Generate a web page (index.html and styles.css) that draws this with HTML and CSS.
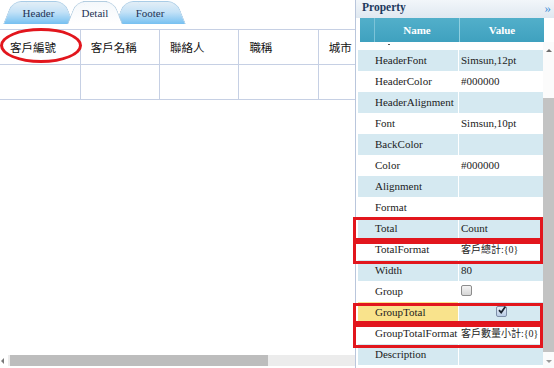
FILE: index.html
```html
<!DOCTYPE html>
<html lang="zh-Hant">
<head>
  <meta charset="UTF-8" />
  <title>Report Designer</title>
  <link rel="stylesheet" href="styles.css">
</head>
<body>
<div class="app">
  <div class="designer">
    <div class="tabs">
      <div class="tab">Header</div>
      <div class="tab active">Detail</div>
      <div class="tab">Footer</div>
    </div>
    <div class="sheet">
      <table class="cols">
        <colgroup><col class="c1"><col><col><col><col></colgroup>
        <tr><th>客戶編號</th><th>客戶名稱</th><th>聯絡人</th><th>職稱</th><th>城市</th></tr>
        <tr><td></td><td></td><td></td><td></td><td></td></tr>
      </table>
    </div>
    <div class="hscroll">
      <span class="arrow-left"></span>
      <div class="htrack"><div class="hthumb"></div></div>
    </div>
  </div>

  <div class="props">
    <div class="props-title">Property<span class="collapse">»</span></div>
    <div class="props-head">
      <span class="rh"></span>
      <span class="hname">Name</span>
      <span class="hvalue">Value</span>
    </div>
    <div class="props-body">
      <div class="props-rows">
        <div class="prow partial"><span class="pname"><i class="dot"></i></span><span class="pval"></span></div>
        <div class="prow alt"><span class="pname">HeaderFont</span><span class="pval">Simsun,12pt</span></div>
        <div class="prow"><span class="pname">HeaderColor</span><span class="pval">#000000</span></div>
        <div class="prow alt"><span class="pname">HeaderAlignment</span><span class="pval"></span></div>
        <div class="prow"><span class="pname">Font</span><span class="pval">Simsun,10pt</span></div>
        <div class="prow alt"><span class="pname">BackColor</span><span class="pval"></span></div>
        <div class="prow"><span class="pname">Color</span><span class="pval">#000000</span></div>
        <div class="prow alt"><span class="pname">Alignment</span><span class="pval"></span></div>
        <div class="prow"><span class="pname">Format</span><span class="pval"></span></div>
        <div class="prow alt"><span class="pname">Total</span><span class="pval">Count</span></div>
        <div class="prow"><span class="pname">TotalFormat</span><span class="pval cjk">客戶總計:{0}</span></div>
        <div class="prow alt"><span class="pname">Width</span><span class="pval">80</span></div>
        <div class="prow"><span class="pname">Group</span><span class="pval"><span class="check"></span></span></div>
        <div class="prow alt"><span class="pname selected">GroupTotal</span><span class="pval center"><span class="check on"><svg viewBox="0 0 10 10" width="10" height="10"><path d="M2 5.2 L4.2 7.6 L8.3 1.8" fill="none" stroke="#1b2430" stroke-width="1.8"/></svg></span></span></div>
        <div class="prow"><span class="pname">GroupTotalFormat</span><span class="pval cjk">客戶數量小計:{0}</span></div>
        <div class="prow alt"><span class="pname">Description</span><span class="pval"></span></div>
        <div class="prow"><span class="pname"></span><span class="pval"></span></div>
      </div>
      <div class="vscroll">
        <span class="arrow-up"></span>
        <div class="vthumb"></div>
        <span class="arrow-down"></span>
      </div>
    </div>
  </div>

  <!-- hand-drawn annotations -->
  <div class="mark ellipse"></div>
  <div class="mark box total"></div>
  <div class="mark box total-format"></div>
  <div class="mark box group-total"></div>
  <div class="mark box group-total-format"></div>
</div>
</body>
</html>
```

FILE: styles.css
```css
html, body { margin: 0; padding: 0; background: #fff; }
body { font-family: "Liberation Serif", "Noto Sans CJK TC", serif; font-size: 11px; color: #1c1c1c; }

.app { position: relative; display: flex; width: 554px; height: 368px; overflow: hidden; }

/* left: designer */
.designer { width: 355px; border-right: 1px solid #b9c6dc; display: flex; flex-direction: column; }
.tabs { height: 29px; display: flex; align-items: flex-start; padding: 1px 0 0 3px; box-sizing: border-box; }
.tab { position: relative; height: 23px; line-height: 25px; text-align: center; color: #1f3354; font-size: 11px; z-index: 1; }
.tab:nth-child(1) { width: 71px; }
.tab:nth-child(2) { width: 56px; margin-left: -7px; z-index: 3; }
.tab:nth-child(3) { width: 70px; margin-left: -8px; z-index: 2; }
.tab::before, .tab::after {
  content: ""; position: absolute; top: 0; bottom: 0; z-index: -1;
  background: linear-gradient(#e3eef6, #c4e2f7 45%, #76c0f1);
  border-top: 1px solid #a9cce6;
}
.tab::before { left: 0; right: 45%; transform: skewX(-22deg); transform-origin: bottom left; border-left: 1px solid #a9cce6; border-top-left-radius: 9px; }
.tab::after { left: 45%; right: 0; transform: skewX(22deg); transform-origin: bottom right; border-right: 1px solid #a9cce6; border-top-right-radius: 9px; }
.tab.active::before, .tab.active::after { background: linear-gradient(#f4f8fb, #ffffff); border-color: #b3cde0; }

.sheet { flex: 1; overflow: hidden; }
.cols { border-collapse: collapse; table-layout: fixed; width: 398px; }
.cols col { width: 78px; }
.cols col.c1 { width: 79px; }
.cols th, .cols td { border: 1px solid #c6d0e4; height: 34px; padding: 0 10px; text-align: left; font-weight: normal; font-family: "Noto Sans CJK TC", sans-serif; font-size: 11.5px; color: #111; white-space: nowrap; }
.cols th:first-child, .cols td:first-child { border-left: none; }

.hscroll { height: 15px; position: relative; display: flex; align-items: center; }
.arrow-left { position: absolute; left: 1px; top: 5px; border: 3px solid transparent; border-right-color: #7a7a7a; border-left-width: 0; }
.htrack { margin-left: 8px; flex: 1; height: 11px; background: #ececec; }
.hthumb { margin-left: 2px; width: 258px; height: 11px; background: #bdbdbd; }

/* right: property grid */
.props { width: 198px; background: #fff; display: flex; flex-direction: column; }
.props-title { position: relative; height: 18px; line-height: 15px; padding-left: 6px; font-weight: bold; font-size: 11.5px; color: #1d3a5e; background: linear-gradient(#f2f6fa, #dfe8f1); }
.collapse { position: absolute; right: 3px; top: 0; font-weight: normal; font-size: 13px; color: #3c8fd8; }
.props-head { display: flex; height: 24px; margin-left: 4px; margin-right: 10px; background: linear-gradient(#52afca, #3fa1bf); color: #fff; font-weight: bold; line-height: 24px; }
.props-head span { text-align: center; }
.rh { width: 14px; border-right: 1px solid #7cc3d8; }
.hname { width: 84px; border-right: 1px solid #8fcfe0; }
.hvalue { flex: 1; }

.props-body { flex: 1; display: flex; overflow: hidden; }
.props-rows { width: 185px; margin-left: 2px; overflow: hidden; }
.prow { display: flex; height: 21px; line-height: 21px; white-space: nowrap; }
.prow.partial { height: 8px; line-height: 8px; }
.pname { width: 83px; padding-left: 17px; border-right: 1px solid #fff; }
.pval { flex: 1; padding-left: 2px; overflow: hidden; }
.pval.cjk { font-size: 10px; }
.pval.center { text-align: center; padding-left: 0; }
.prow.alt .pname, .prow.alt .pval { background: #d5e9f1; }
.prow.alt .pname.selected { background: #f9e38c; }
.dot { display: inline-block; width: 2px; height: 1px; background: #555; margin-left: 13px; vertical-align: top; margin-top: 2px; }

.check { display: inline-block; width: 9px; height: 9px; border: 1px solid #8c8c8c; border-radius: 2px; background: linear-gradient(#f4f4f4, #d6d6d6); vertical-align: middle; margin-top: -3px; }
.check.on { background: linear-gradient(#e7eef8, #b9cde6); border-color: #7d8ea8; position: relative; }
.check svg { position: absolute; left: 0; top: -2px; }

.vscroll { width: 11px; position: relative; background: #fbfbfb; }
.arrow-up { position: absolute; left: 3px; top: 7px; border: 3px solid transparent; border-bottom-color: #6d6d6d; border-top-width: 0; }
.vthumb { position: absolute; left: 0; right: 0; top: 56px; height: 254px; background: #c3c3c3; }
.arrow-down { position: absolute; left: 3px; bottom: 5px; border: 3px solid transparent; border-top-color: #9a9a9a; border-bottom-width: 0; }

/* red annotations */
.mark { position: absolute; border: 3px solid #e2161d; box-sizing: border-box; pointer-events: none; }
.ellipse { left: 0; top: 28px; width: 82px; height: 35px; border-radius: 50%; }
.box { left: 353px; width: 190px; }
.total { top: 217px; height: 24px; }
.total-format { top: 241px; height: 23px; }
.group-total { top: 303px; height: 21px; }
.group-total-format { top: 324px; height: 24px; }
```
